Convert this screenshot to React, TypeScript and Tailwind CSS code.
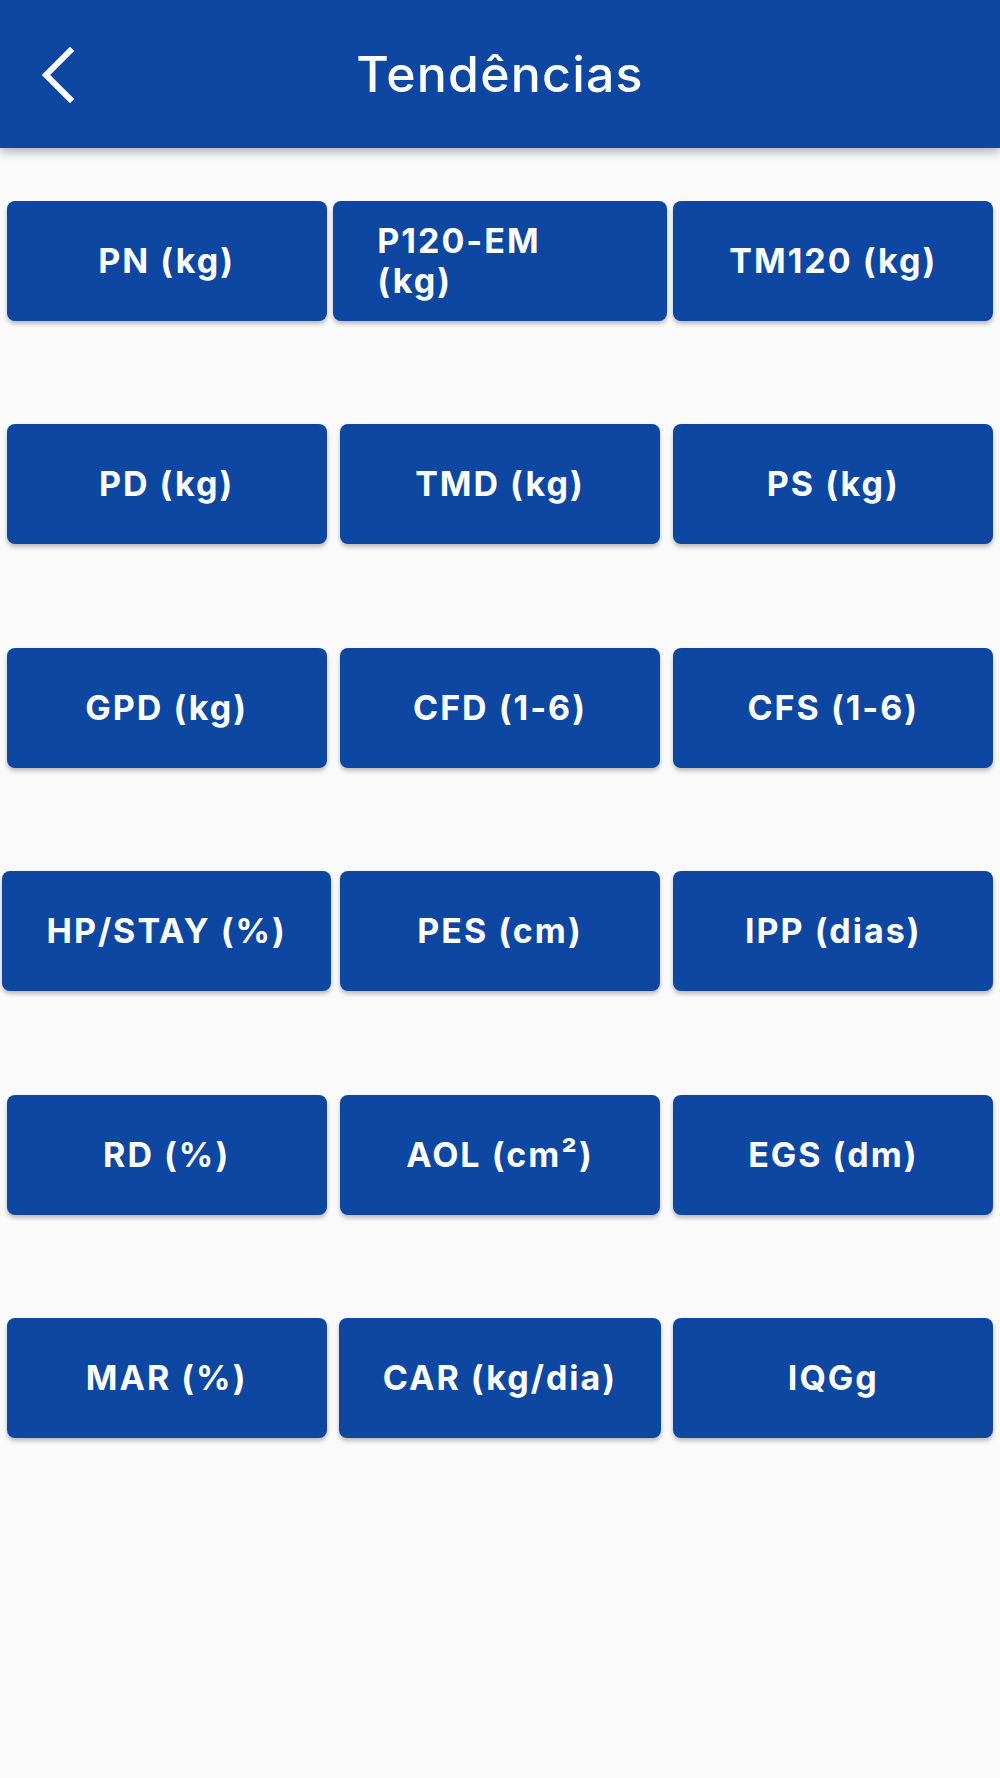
import React from "react";

const rows: string[][] = [
  ["PN (kg)", "P120-EM (kg)", "TM120 (kg)"],
  ["PD (kg)", "TMD (kg)", "PS (kg)"],
  ["GPD (kg)", "CFD (1-6)", "CFS (1-6)"],
  ["HP/STAY (%)", "PES (cm)", "IPP (dias)"],
  ["RD (%)", "AOL (cm²)", "EGS (dm)"],
  ["MAR (%)", "CAR (kg/dia)", "IQGg"],
];

const BackIcon = () => (
  <svg width="34" height="56" viewBox="0 0 34 56" fill="none">
    <path
      d="M29 4 L5 28 L29 52"
      stroke="white"
      strokeWidth="6"
      strokeLinecap="square"
      strokeLinejoin="miter"
    />
  </svg>
);

const TrendButton = ({ label }: { label: string }) => (
  <button className="h-[120px] min-w-[320px] max-w-full px-[44px] rounded-lg bg-[#0d47a1] text-white flex items-center justify-center shadow-[0_3px_4px_rgba(0,0,0,0.25)]">
    <span className="text-left text-[34px] leading-[40px] font-bold tracking-[2px]">
      {label}
    </span>
  </button>
);

export default function App() {
  return (
    <div
      className="min-h-[1778px] w-full bg-[#fafafa]"
      style={{ fontFamily: "Inter, 'Noto Sans', sans-serif" }}
    >
      <header className="relative h-[148px] bg-[#0d47a1] flex items-center justify-center shadow-[0_4px_10px_rgba(0,0,0,0.3)]">
        <button className="absolute left-[41px] top-[47px]">
          <BackIcon />
        </button>
        <h1 className="text-white text-[50px] font-medium tracking-[1.2px]">Tendências</h1>
      </header>

      <main className="pt-[53px] flex flex-col gap-[103.4px]">
        {rows.map((row, i) => (
          <div key={i} className="grid grid-cols-3">
            {row.map((label) => (
              <div key={label} className="flex justify-center">
                <TrendButton label={label} />
              </div>
            ))}
          </div>
        ))}
      </main>
    </div>
  );
}
